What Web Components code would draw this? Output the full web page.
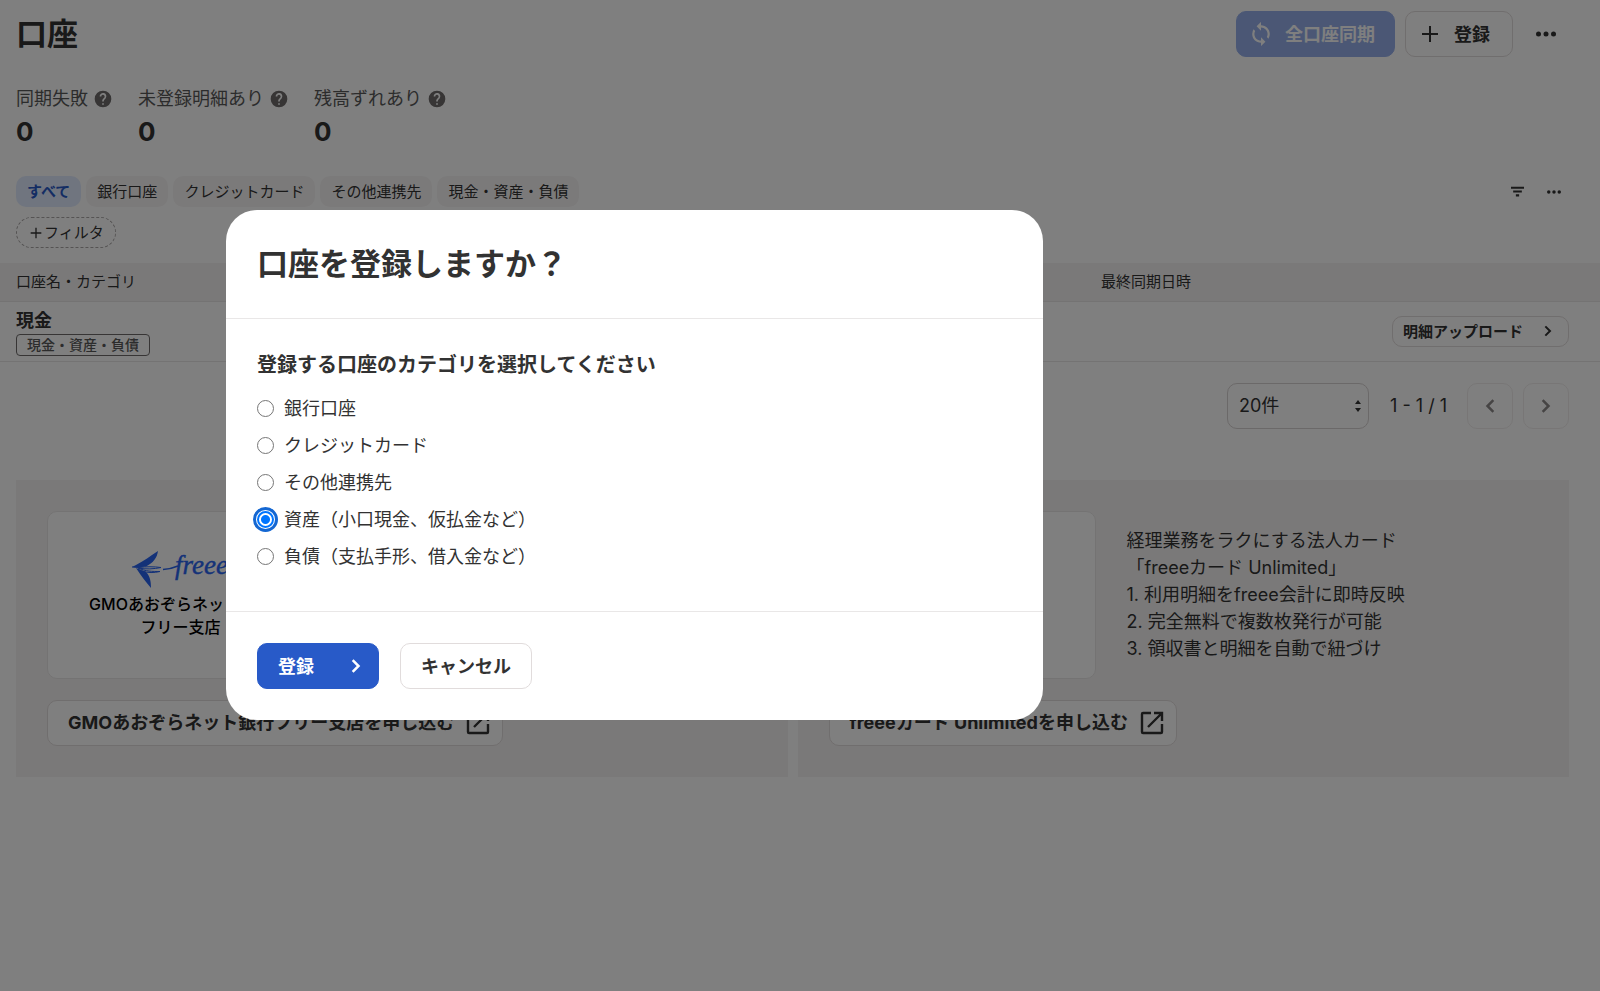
<!DOCTYPE html>
<html lang="ja">
<head>
<meta charset="utf-8">
<title>口座</title>
<style>
    body {
        margin: 0;
        background: #ffffff;
        color: #323232;
        font-family: Inter, "Noto Sans CJK JP", sans-serif;
        font-size: 18px;
        line-height: 27px;
    }
</style>
</head>
<body>
<accounts-page></accounts-page>
<register-dialog heading="口座を登録しますか？"></register-dialog>

<script>
// Icone SVG condivise
const ICONS = {
    sync: '<path d="M12 4V1L8 5l4 4V6c3.31 0 6 2.69 6 6 0 1.01-.25 1.97-.7 2.8l1.46 1.46A7.93 7.93 0 0 0 20 12c0-4.42-3.58-8-8-8zm0 14c-3.31 0-6-2.69-6-6 0-1.01.25-1.97.7-2.8L5.24 7.74A7.93 7.93 0 0 0 4 12c0 4.42 3.58 8 8 8v3l4-4-4-4z" transform="translate(-1.200 -1.200) scale(1.100)"/>',
    plus: '<path d="M4 11h7V4h2v7h7v2h-7v7h-2v-7H4z"/>',
    more: '<circle cx="3" cy="12" r="3"/><circle cx="12" cy="12" r="3"/><circle cx="21" cy="12" r="3"/>',
    help: '<path d="M12 2a10 10 0 1 0 0 20 10 10 0 0 0 0-20zm1 17h-2v-2h2zm2.07-7.75-.9.92C13.45 12.9 13 13.5 13 15h-2v-.5c0-1.1.45-2.1 1.17-2.83l1.24-1.26A2 2 0 1 0 10 9H8a4 4 0 1 1 7.07 2.25z"/>',
    filter: '<path d="M0 3h24v4H0zM4 10h16v4H4zM9 17h6v4H9z"/>',
    right: '<path d="M8 5l7 7-7 7" fill="none" stroke="currentColor" stroke-width="3"/>',
    left: '<path d="M16 5l-7 7 7 7" fill="none" stroke="currentColor" stroke-width="3"/>',
    open: '<path d="M11 2H3a1 1 0 0 0-1 1v18a1 1 0 0 0 1 1h18a1 1 0 0 0 1-1v-8M14 2h8v8M22 2L8 16" fill="none" stroke="currentColor" stroke-width="2.400"/>'
};

class FrIcon extends HTMLElement {
    constructor() {
        super();
        this.attachShadow({ mode: "open" });
    }

    connectedCallback() {
        const size = this.getAttribute("size") || "16";
        this.shadowRoot.innerHTML = `
            <style>
                :host { display: block; flex-shrink: 0; width: ${size}px; height: ${size}px; }
                svg { display: block; width: 100%; height: 100%; }
            </style>
            <svg viewBox="0 0 24 24" fill="currentColor" aria-hidden="true">${ICONS[this.getAttribute("name")] || ""}</svg>
        `;
    }
}

class FrButton extends HTMLElement {
    constructor() {
        super();
        this.attachShadow({ mode: "open" });
    }

    connectedCallback() {
        const label = this.getAttribute("label");
        const disabled = this.hasAttribute("disabled") ? "disabled" : "";
        this.shadowRoot.innerHTML = `
            <style>
                :host { display: block; }
                button {
                    display: flex;
                    align-items: center;
                    justify-content: center;
                    gap: 12px;
                    box-sizing: border-box;
                    width: 100%;
                    height: 46px;
                    margin: 0;
                    padding: 0 20px;
                    border: 1px solid #e1dcdc;
                    border-radius: 10px;
                    background: #ffffff;
                    color: #323232;
                    font: 700 18px/27px Inter, "Noto Sans CJK JP", sans-serif;
                    white-space: nowrap;
                    cursor: pointer;
                }
                :host([icon="start"]) button { justify-content: flex-start; padding-left: 12px; }
                :host([icon="end"]) button { justify-content: space-between; padding-right: 12px; }
                :host([appearance="primary"]) button { background: #285ac8; border-color: #285ac8; color: #ffffff; }
                :host([appearance="primary"]) button:disabled { background: #96afeb; border-color: #96afeb; }
                :host([appearance="tertiary"]) button { border-color: transparent; background: transparent; padding: 0; }
                :host([size="small"]) button { height: 31px; padding-left: 10px; font-size: 15px; }
                :host([square]) button { width: 46px; padding: 0; }
                :host([square]) button:disabled { color: #8c8989; border-color: #f0eded; }
            </style>
            <button type="button" ${disabled} ${label ? `aria-label="${label}"` : ""}><slot></slot></button>
        `;
    }
}

class StatItem extends HTMLElement {
    constructor() {
        super();
        this.attachShadow({ mode: "open" });
    }

    connectedCallback() {
        this.shadowRoot.innerHTML = `
            <style>
                :host { display: block; }
                .label { display: flex; align-items: center; gap: 5px; color: #595959; }
                fr-icon { color: #6e6b6b; }
                .value { font-size: 26px; font-weight: 700; line-height: 40px; }
            </style>
            <div class="label"><slot></slot><fr-icon name="help" size="20"></fr-icon></div>
            <div class="value">${this.getAttribute("value")}</div>
        `;
    }
}

class FilterBar extends HTMLElement {
    constructor() {
        super();
        this.attachShadow({ mode: "open" });
    }

    connectedCallback() {
        const tabs = ["すべて", "銀行口座", "クレジットカード", "その他連携先", "現金・資産・負債"];
        this.shadowRoot.innerHTML = `
            <style>
                :host { display: flex; align-items: flex-start; justify-content: space-between; }
                .tabs { display: flex; gap: 5px; margin-bottom: 10px; }
                button {
                    display: flex;
                    align-items: center;
                    box-sizing: border-box;
                    height: 31px;
                    margin: 0;
                    padding: 0 11px;
                    border: 0;
                    border-radius: 10px;
                    background: #f7f5f5;
                    color: #323232;
                    font: 400 15px/23px Inter, "Noto Sans CJK JP", sans-serif;
                }
                .tabs button[aria-pressed="true"] { background: #e1ebff; color: #285ac8; font-weight: 700; }
                .add { padding: 0 11px; border: 1px dashed #aaa7a7; border-radius: 16px; background: none; }
                .tools { display: flex; gap: 5px; }
                .tools button { width: 31px; padding: 0; justify-content: center; background: none; }
            </style>
            <div>
                <div class="tabs">
                    ${tabs.map((tab, i) => `<button type="button" aria-pressed="${i === 0}">${tab}</button>`).join("")}
                </div>
                <button type="button" class="add"><fr-icon name="plus" size="16"></fr-icon>フィルタ</button>
            </div>
            <div class="tools">
                <button type="button" aria-label="並び替え"><fr-icon name="filter" size="13"></fr-icon></button>
                <button type="button" aria-label="その他"><fr-icon name="more" size="14"></fr-icon></button>
            </div>
        `;
    }
}

class AccountTable extends HTMLElement {
    constructor() {
        super();
        this.attachShadow({ mode: "open" });
    }

    connectedCallback() {
        this.shadowRoot.innerHTML = `
            <style>
                :host { display: block; }
                table { width: 100%; border-collapse: collapse; table-layout: fixed; }
                th, td { box-sizing: border-box; padding: 0 16px; text-align: left; border-bottom: 1px solid #e9e7e7; }
                th { height: 38px; background: #f5f3f3; font-size: 15px; font-weight: 400; line-height: 23px; }
                td { height: 60px; line-height: 27px; }
                th:first-child { width: 1085px; }
                .action { padding: 0 31px 0 0; }
                .action fr-button { width: 177px; margin-left: auto; }
                .tag {
                    display: block;
                    box-sizing: border-box;
                    width: max-content;
                    padding: 0 10px;
                    border: 1px solid #6e6b6b;
                    border-radius: 4px;
                    color: #595959;
                    font-size: 14px;
                    font-weight: 500;
                    line-height: 20px;
                }
            </style>
            <table>
                <thead>
                    <tr><th>口座名・カテゴリ</th><th>最終同期日時</th></tr>
                </thead>
                <tbody>
                    <tr>
                        <td><strong>現金</strong><span class="tag">現金・資産・負債</span></td>
                        <td class="action"><fr-button size="small" icon="end">明細アップロード<fr-icon name="right" size="16"></fr-icon></fr-button></td>
                    </tr>
                </tbody>
            </table>
        `;
    }
}

class PageNav extends HTMLElement {
    constructor() {
        super();
        this.attachShadow({ mode: "open" });
    }

    connectedCallback() {
        this.shadowRoot.innerHTML = `
            <style>
                :host { display: flex; align-items: center; justify-content: flex-end; gap: 10px; }
                .select { position: relative; width: 142px; }
                select {
                    appearance: none;
                    box-sizing: border-box;
                    display: block;
                    width: 100%;
                    height: 46px;
                    padding: 0 11px;
                    border: 1px solid #d7d2d2;
                    border-radius: 10px;
                    background: #ffffff;
                    color: #323232;
                    font: 400 18px/27px Inter, "Noto Sans CJK JP", sans-serif;
                }
                .select svg { position: absolute; right: 8px; top: 16px; pointer-events: none; }
                .range { margin: 0 10px 0 11px; }
            </style>
            <div class="select">
                <select aria-label="表示件数"><option>20件</option></select>
                <svg width="6" height="14" viewBox="0 0 6 14" fill="#323232"><path d="M3 1l3 4H0zM3 13l3-4H0z"/></svg>
            </div>
            <span class="range">1 - 1 / 1</span>
            <fr-button square disabled label="前へ"><fr-icon name="left" size="20"></fr-icon></fr-button>
            <fr-button square disabled label="次へ"><fr-icon name="right" size="20"></fr-icon></fr-button>
        `;
    }
}

class PromoCard extends HTMLElement {
    constructor() {
        super();
        this.attachShadow({ mode: "open" });
    }

    connectedCallback() {
        this.shadowRoot.innerHTML = `
            <style>
                :host { display: block; padding: 31px; background: #f5f3f3; }
                .top { display: flex; align-items: center; gap: 31px; margin-bottom: 21px; }
                .picture {
                    display: flex;
                    flex-direction: column;
                    align-items: center;
                    justify-content: center;
                    gap: 4px;
                    box-sizing: border-box;
                    width: 267px;
                    height: 168px;
                    border: 1px solid #e9e7e7;
                    border-radius: 10px;
                    background: #ffffff;
                }
                fr-button { width: max-content; }
            </style>
            <div class="top">
                <div class="picture"><slot name="picture"></slot></div>
                <div><slot></slot></div>
            </div>
            <fr-button icon="end">${this.getAttribute("action")}<fr-icon name="open" size="24"></fr-icon></fr-button>
        `;
    }
}

// Logo freee: rondine disegnata, nome come testo
class FreeeLogo extends HTMLElement {
    constructor() {
        super();
        this.attachShadow({ mode: "open" });
    }

    connectedCallback() {
        this.shadowRoot.innerHTML = `
            <style>
                :host { display: block; color: #2864f0; }
                svg { display: block; overflow: visible; }
                text { font: italic 400 27px "Liberation Serif", serif; stroke: currentColor; stroke-width: 0.400; }
            </style>
            <svg width="98" height="38" viewBox="0 0 98 38" fill="currentColor" aria-label="freee">
                <path d="M0 16L4 14C12 10 18 5 26 0C25 7 21 12 14 15.500L6 16.500Z"/>
                <path d="M4 17L7 18L14 21C18 25 19 30 19 37C15 32 9 25 4 17Z"/>
                <path d="M0 16L7 16.500C14 15.500 22 15.500 29 16.500C22 18 14 18.500 6 17C14 20.500 20 20.500 28 20.500C22 22 16 22 10 20" fill="none" stroke="currentColor" stroke-width="1"/>
                <path d="M31 18.500Q39 18 46 15" fill="none" stroke="currentColor" stroke-width="1.600"/>
                <text x="43" y="23">freee</text>
            </svg>
        `;
    }
}

class AccountsPage extends HTMLElement {
    constructor() {
        super();
        this.attachShadow({ mode: "open" });
    }

    connectedCallback() {
        this.shadowRoot.innerHTML = `
            <style>
                :host { display: block; }
                header { display: flex; align-items: center; gap: 10px; padding: 11px 31px 0 16px; }
                h1 { flex: 1; margin: 0; font-size: 31px; line-height: 46px; }
                .sync { width: 159px; }
                .add { width: 108px; }
                .stats { display: flex; gap: 25px; padding: 28px 16px 0; }
                filter-bar { padding: 24px 31px 0 16px; }
                account-table { margin-top: 15px; }
                page-nav { padding: 21px 31px 0; }
                .promos { display: grid; grid-template-columns: 1fr 1fr; gap: 10px; padding: 51px 31px 0 16px; }
                .caption { color: #000000; font-size: 16px; font-weight: 500; line-height: 23px; text-align: center; }
                p { margin: 0; }
            </style>
            <header>
                <h1>口座</h1>
                <fr-button class="sync" appearance="primary" icon="start" disabled><fr-icon name="sync" size="24"></fr-icon>全口座同期</fr-button>
                <fr-button class="add" icon="start"><fr-icon name="plus" size="24"></fr-icon>登録</fr-button>
                <fr-button square appearance="tertiary" label="その他の操作"><fr-icon name="more" size="20"></fr-icon></fr-button>
            </header>
            <div class="stats">
                <stat-item value="0">同期失敗</stat-item>
                <stat-item value="0">未登録明細あり</stat-item>
                <stat-item value="0">残高ずれあり</stat-item>
            </div>
            <filter-bar></filter-bar>
            <account-table></account-table>
            <page-nav></page-nav>
            <div class="promos">
                <promo-card action="GMOあおぞらネット銀行フリー支店を申し込む">
                    <freee-logo slot="picture"></freee-logo>
                    <div class="caption" slot="picture">GMOあおぞらネット銀行<br>フリー支店</div>
                </promo-card>
                <promo-card action="freeeカード Unlimitedを申し込む">
                    <p>経理業務をラクにする法人カード<br>「freeeカード Unlimited」<br>1. 利用明細をfreee会計に即時反映<br>2. 完全無料で複数枚発行が可能<br>3. 領収書と明細を自動で紐づけ</p>
                </promo-card>
            </div>
        `;
    }
}

class RegisterDialog extends HTMLElement {
    constructor() {
        super();
        this.attachShadow({ mode: "open" });
    }

    connectedCallback() {
        const options = ["銀行口座", "クレジットカード", "その他連携先", "資産（小口現金、仮払金など）", "負債（支払手形、借入金など）"];
        this.shadowRoot.innerHTML = `
            <style>
                :host {
                    position: fixed;
                    inset: 0;
                    display: block;
                    box-sizing: border-box;
                    padding: 210px 0 0 226px;
                    background: rgba(0, 0, 0, 0.5);
                }
                .dialog { width: 817px; max-width: 100%; border-radius: 31px; background: #ffffff; }
                h2 { margin: 0; padding: 31px; border-bottom: 1px solid #e9e7e7; font-size: 31px; line-height: 46px; }
                fieldset { margin: 0; padding: 31px 31px 36px; border: 0; }
                legend { float: left; width: 100%; padding: 0; margin-bottom: 9px; font-size: 20px; font-weight: 700; line-height: 31px; }
                label { display: flex; align-items: center; gap: 10px; clear: both; height: 37px; }
                input {
                    appearance: none;
                    flex-shrink: 0;
                    box-sizing: border-box;
                    width: 17px;
                    height: 17px;
                    margin: 0;
                    border: 1px solid #767676;
                    border-radius: 50%;
                    background: #ffffff;
                }
                input:checked {
                    border: 2px solid #0075ff;
                    background: radial-gradient(circle, #0075ff 4px, #ffffff 5px);
                    outline: 3px solid #1467d2;
                    outline-offset: 1px;
                }
                footer { display: flex; gap: 21px; padding: 31px; border-top: 1px solid #e9e7e7; }
                .submit { width: 122px; }
            </style>
            <div class="dialog" role="dialog" aria-modal="true" aria-labelledby="heading">
                <h2 id="heading">${this.getAttribute("heading")}</h2>
                <fieldset>
                    <legend>登録する口座のカテゴリを選択してください</legend>
                    ${options.map((text, i) => `
                        <label><input type="radio" name="category" ${i === 3 ? "checked" : ""}>${text}</label>
                    `).join("")}
                </fieldset>
                <footer>
                    <fr-button class="submit" appearance="primary" icon="end">登録<fr-icon name="right" size="20"></fr-icon></fr-button>
                    <fr-button>キャンセル</fr-button>
                </footer>
            </div>
        `;
    }
}

customElements.define("fr-icon", FrIcon);
customElements.define("fr-button", FrButton);
customElements.define("stat-item", StatItem);
customElements.define("filter-bar", FilterBar);
customElements.define("account-table", AccountTable);
customElements.define("page-nav", PageNav);
customElements.define("promo-card", PromoCard);
customElements.define("freee-logo", FreeeLogo);
customElements.define("accounts-page", AccountsPage);
customElements.define("register-dialog", RegisterDialog);
</script>
</body>
</html>
